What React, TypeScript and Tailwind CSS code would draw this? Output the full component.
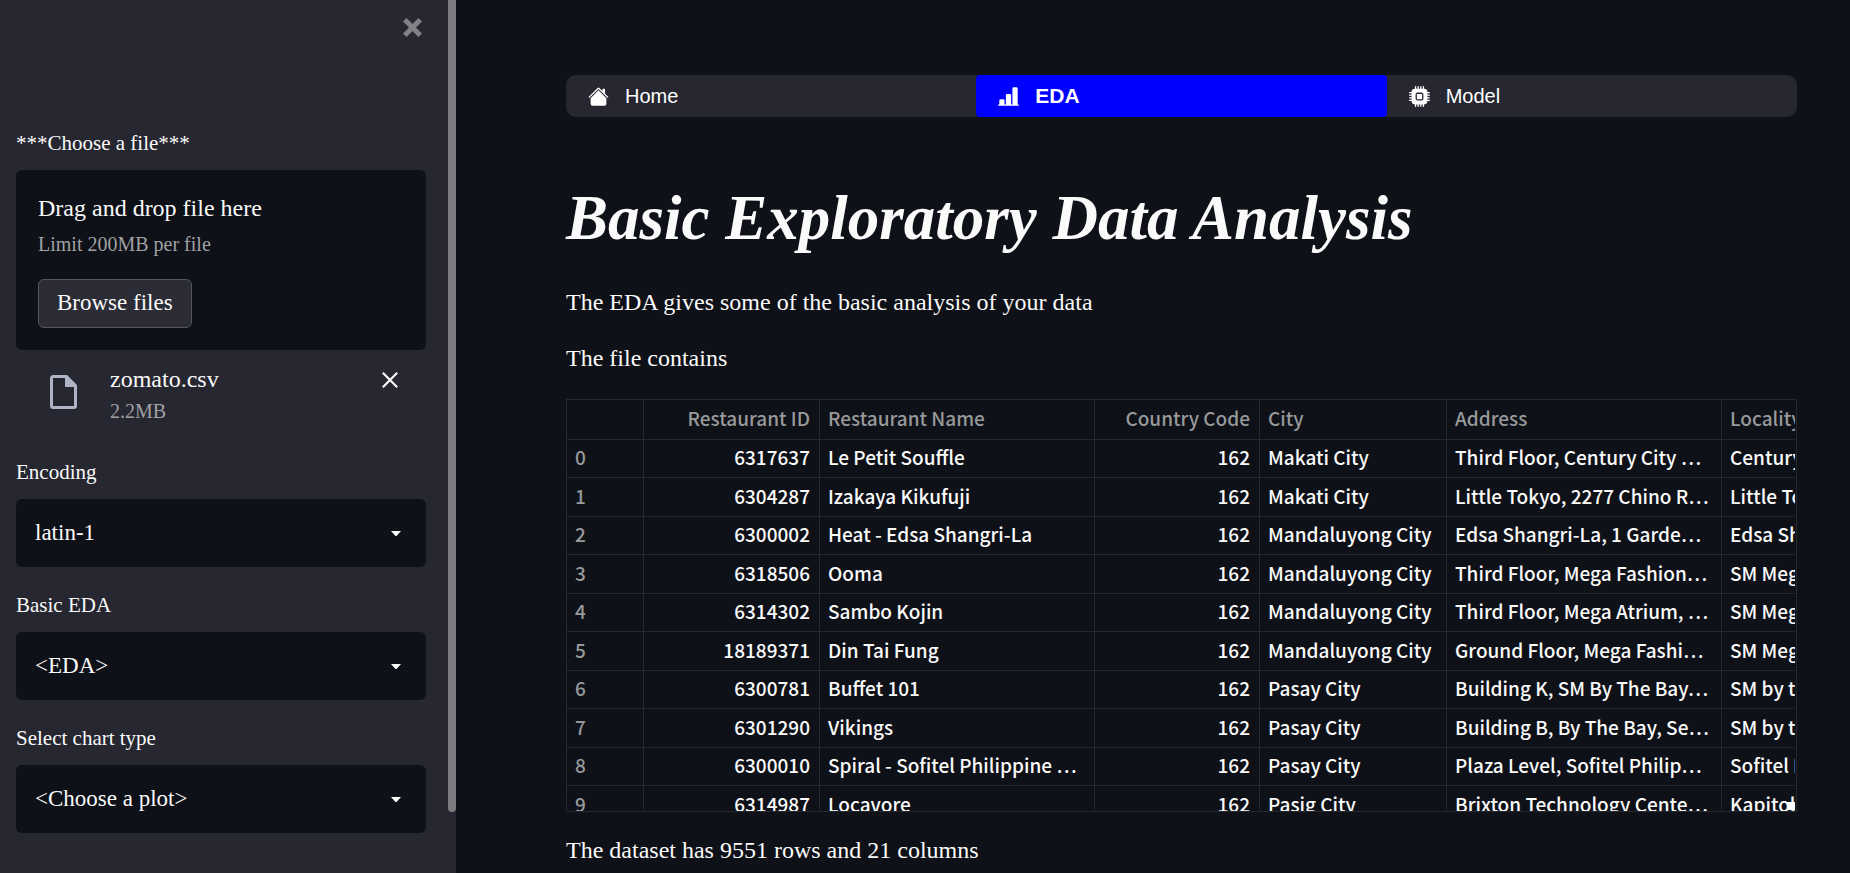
import React from "react";
import { BsBarChartLineFill, BsCpuFill } from "react-icons/bs";

const serif = "font-['Source_Serif_Pro','Liberation_Serif',serif]";
const sans = "font-['Source_Sans_Pro','Noto_Sans_CJK_JP',sans-serif]";

type Row = [string, string, string, string, string];

const rows: Row[] = [
  ["6317637", "Le Petit Souffle", "Makati City", "Third Floor, Century City …", "Century City Mall"],
  ["6304287", "Izakaya Kikufuji", "Makati City", "Little Tokyo, 2277 Chino R…", "Little Tokyo, Legaspi"],
  ["6300002", "Heat - Edsa Shangri-La", "Mandaluyong City", "Edsa Shangri-La, 1 Garde…", "Edsa Shangri-La"],
  ["6318506", "Ooma", "Mandaluyong City", "Third Floor, Mega Fashion…", "SM Megamall"],
  ["6314302", "Sambo Kojin", "Mandaluyong City", "Third Floor, Mega Atrium, …", "SM Megamall"],
  ["18189371", "Din Tai Fung", "Mandaluyong City", "Ground Floor, Mega Fashi…", "SM Megamall"],
  ["6300781", "Buffet 101", "Pasay City", "Building K, SM By The Bay…", "SM by the Bay"],
  ["6301290", "Vikings", "Pasay City", "Building B, By The Bay, Se…", "SM by the Bay"],
  ["6300010", "Spiral - Sofitel Philippine …", "Pasay City", "Plaza Level, Sofitel Philip…", "Sofitel Philippine"],
  ["6314987", "Locavore", "Pasig City", "Brixton Technology Cente…", "Kapitolyo"],
];

function HouseIcon() {
  return (
    <svg viewBox="0 0 16 16" className="size-[21px] shrink-0" fill="currentColor" aria-hidden="true">
      <path d="m8 3.293 6 6V13.5a1.5 1.5 0 0 1-1.5 1.5h-9A1.5 1.5 0 0 1 2 13.5V9.293l6-6zm5-.793V6l-2-2V2.5a.5.5 0 0 1 .5-.5h1a.5.5 0 0 1 .5.5z" />
      <path d="M7.293 1.5a1 1 0 0 1 1.414 0l6.647 6.646a.5.5 0 0 1-.708.708L8 2.207 1.354 8.854a.5.5 0 1 1-.708-.708L7.293 1.5z" />
    </svg>
  );
}

function SelectField({ id, label, value }: { id: string; label: string; value: string }) {
  return (
    <div className="flex flex-col gap-[13px]">
      <label htmlFor={id} className="text-[21px] leading-7">
        {label}
      </label>
      <div className="relative">
        <select
          id={id}
          defaultValue={value}
          className="block h-[68px] w-full appearance-none rounded-md bg-[#0e1117] pr-12 pl-[19px] text-[23px] outline-none"
        >
          <option>{value}</option>
        </select>
        <svg viewBox="0 0 10 5" className="pointer-events-none absolute top-8 right-[25px] h-[5px] w-[10px]" fill="currentColor" aria-hidden="true">
          <path d="M0 0h10L6 4.6a1.4 1.4 0 0 1-2 0z" />
        </svg>
      </div>
    </div>
  );
}

function Sidebar() {
  return (
    <aside className="flex w-[456px] shrink-0 bg-[#262730]">
      <div className="flex min-w-0 flex-1 flex-col pr-[22px] pl-4">
        <div className="flex h-[129px] items-start justify-end pt-[18px] pr-1">
          <button type="button" aria-label="Close sidebar" className="text-[#818187]">
            <svg viewBox="0 0 19 19" className="size-[19px]" stroke="currentColor" strokeWidth="5" aria-hidden="true">
              <path d="M1.8 1.8l15.4 15.4M17.2 1.8L1.8 17.2" />
            </svg>
          </button>
        </div>

        <label htmlFor="upload" className="text-[21px] leading-7">
          ***Choose a file***
        </label>
        <section className="mt-[13px] flex h-[180px] flex-col items-start rounded-md bg-[#0e1117] px-[22px] pt-[22px]">
          <span className="text-2xl leading-8">Drag and drop file here</span>
          <span className="mt-1 text-xl leading-8 text-[#a0a1a4]">Limit 200MB per file</span>
          <input id="upload" type="file" className="hidden" />
          <button
            type="button"
            className="mt-[19px] h-[49px] rounded-md border border-[#55565e] bg-[#2b2c36] px-[18px] pb-0.5 text-[23px] leading-8"
          >
            Browse files
          </button>
        </section>

        <div className="flex h-[108px] items-start pt-[13px] pr-7 pl-[34px]">
          <svg viewBox="0 0 27 34" className="mt-3 h-[34px] w-[27px]" aria-hidden="true">
            <path d="M3 1.5h13.5L25.5 10.5V31a1.5 1.5 0 0 1-1.5 1.5H3A1.5 1.5 0 0 1 1.5 31V3A1.5 1.5 0 0 1 3 1.5z" fill="none" stroke="#aeb3c5" strokeWidth="3" />
            <path d="M15 1v11h11z" fill="#aeb3c5" />
          </svg>
          <div className="ml-[33px] flex flex-1 flex-col">
            <span className="text-2xl leading-8">zomato.csv</span>
            <span className="text-xl leading-8 text-[#a0a1a4]">2.2MB</span>
          </div>
          <button type="button" aria-label="Remove file" className="mt-[9px]">
            <svg viewBox="0 0 16 16" className="size-4" stroke="currentColor" strokeWidth="2.2" aria-hidden="true">
              <path d="M.8.8l14.4 14.4M15.2.8L.8 15.2" />
            </svg>
          </button>
        </div>

        <div className="flex flex-col gap-6">
          <SelectField id="encoding" label="Encoding" value="latin-1" />
          <SelectField id="basic-eda" label="Basic EDA" value="<EDA>" />
          <SelectField id="chart-type" label="Select chart type" value="<Choose a plot>" />
        </div>
      </div>
      <div className="w-2">
        <div className="h-[93vh] rounded-b-full bg-[#7d7c81]" />
      </div>
    </aside>
  );
}

const tab = "flex flex-1 items-center gap-4 px-[22px] leading-6";

function Menu() {
  return (
    <nav className="flex h-[42px] overflow-hidden rounded-[10px] bg-[#262730] font-['Liberation_Sans',sans-serif] text-white">
      <a href="#home" className={tab + " text-xl"}>
        <HouseIcon />
        Home
      </a>
      <a href="#eda" className={tab + " rounded bg-[#0000ff] text-[21px] font-black"}>
        <BsBarChartLineFill className="size-[21px] shrink-0" />
        EDA
      </a>
      <a href="#model" className={tab + " text-xl"}>
        <BsCpuFill className="size-[21px] shrink-0" />
        Model
      </a>
    </nav>
  );
}

const cell = "overflow-hidden border-r border-b border-[#26282d] pt-0 pr-[9px] pb-[3px] pl-2 whitespace-nowrap";
const head = cell + " font-medium text-[#98999b]";

function DataTable() {
  return (
    <div className={sans + " relative mt-[25px] h-[413px] overflow-hidden border border-[#26282d] pr-px text-[19px] leading-7 font-medium"}>
      <div className="h-full overflow-hidden">
        <table className="w-[1430px] table-fixed border-separate border-spacing-0">
          <colgroup>
            <col className="w-[77px]" />
            <col className="w-[176px]" />
            <col className="w-[275px]" />
            <col className="w-[165px]" />
            <col className="w-[187px]" />
            <col className="w-[275px]" />
            <col className="w-[275px]" />
          </colgroup>
          <thead>
            <tr className="h-10">
              <th className={head}></th>
              <th className={head + " text-right"}>Restaurant ID</th>
              <th className={head + " text-left"}>Restaurant Name</th>
              <th className={head + " text-right"}>Country Code</th>
              <th className={head + " text-left"}>City</th>
              <th className={head + " text-left"}>Address</th>
              <th className={head + " text-left"}>Locality</th>
            </tr>
          </thead>
          <tbody>
            {rows.map(([id, name, city, address, locality], i) => (
              <tr key={id} className="h-[38px] even:h-[39px]">
                <th scope="row" className={head + " text-left"}>{i}</th>
                <td className={cell + " text-right"}>{id}</td>
                <td className={cell}>{name}</td>
                <td className={cell + " text-right"}>162</td>
                <td className={cell}>{city}</td>
                <td className={cell}>{address}</td>
                <td className={cell}>{locality}</td>
              </tr>
            ))}
          </tbody>
        </table>
      </div>
      <div className="absolute right-px bottom-px size-2 bg-white" />
    </div>
  );
}

export default function App() {
  return (
    <div className={serif + " flex h-screen min-w-[1100px] overflow-hidden bg-[#0e1117] text-[#fafafa]"}>
      <Sidebar />
      <main className="min-w-0 flex-1 pt-[75px] pr-[53px] pl-[110px]">
        <Menu />
        <h1 className="mt-[65px] text-[63px] leading-[72px] font-bold italic">Basic Exploratory Data Analysis</h1>
        <p className="mt-8 text-2xl leading-8">The EDA gives some of the basic analysis of your data</p>
        <p className="mt-6 text-2xl leading-8">The file contains</p>
        <DataTable />
        <p className="mt-[22px] text-2xl leading-8">The dataset has 9551 rows and 21 columns</p>
      </main>
    </div>
  );
}
